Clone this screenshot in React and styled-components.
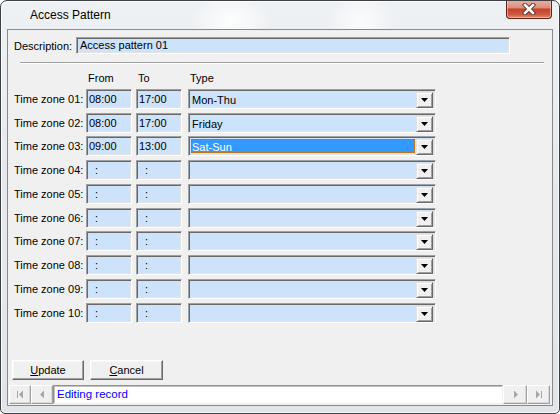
import React from "react";
import styled, { createGlobalStyle } from "styled-components";

const Global = createGlobalStyle`
  html, body { margin: 0; padding: 0; background: #ffffff; }
  * { box-sizing: border-box; }
`;

const FIELD_BG = "#cde2fb";

const Window = styled.div`
  position: relative;
  width: 560px;
  height: 414px;
  border: 1px solid #3c3f44;
  border-radius: 7px 7px 5px 5px;
  padding: 0 6px 7px 6px;
  display: flex;
  flex-direction: column;
  overflow: hidden;
  background:
    radial-gradient(ellipse 60px 40px at 230px 20px, rgba(255,255,255,0.9), rgba(255,255,255,0) 70%),
    radial-gradient(ellipse 50px 40px at 360px 20px, rgba(255,255,255,0.8), rgba(255,255,255,0) 70%),
    linear-gradient(180deg, #eef1f4 0%, #e6eaee 40%, #e1e5ea 100%);
  box-shadow: inset 1px 1px 0 rgba(255,255,255,0.9), inset -1px -1px 0 rgba(255,255,255,0.7);
`;

const TitleBar = styled.div`
  height: 28px;
  display: flex;
  align-items: flex-start;
  justify-content: space-between;
  padding-left: 23px;
`;

const Title = styled.div`
  font-family: "Liberation Sans", Arial, sans-serif;
  font-size: 12px;
  line-height: 28px;
  color: #000;
`;

const CloseButton = styled.div`
  width: 46px;
  height: 19px;
  margin-right: 1px;
  margin-top: -1px;
  border: 1px solid #5e2318;
  border-top: none;
  border-radius: 0 0 4px 4px;
  background: linear-gradient(180deg, #eab0a2 0%, #de8f7d 42%, #c5432d 52%, #cf5a42 80%, #e08a6c 100%);
  box-shadow: inset 0 0 0 1px rgba(255, 210, 200, 0.55);
  display: flex;
  align-items: center;
  justify-content: center;
`;

const Client = styled.div`
  flex: 1;
  border: 1px solid #858a90;
  background: #f0f0f0;
  display: flex;
  flex-direction: column;
  font-family: "Liberation Sans", Arial, sans-serif;
  font-size: 11px;
  color: #000;
`;

const DescRow = styled.div`
  display: flex;
  align-items: center;
  margin-top: 7px;
  padding-left: 6px;
  height: 17px;
`;

const DescLabel = styled.div`
  width: 62px;
`;

const sunken = `
  border: 1px solid;
  border-color: #a0a0a0 #ffffff #ffffff #a0a0a0;
  box-shadow: inset 1px 1px 0 #696969, inset -1px -1px 0 #e3e3e3;
`;

const DescInput = styled.div`
  ${sunken}
  width: 434px;
  height: 17px;
  background: ${FIELD_BG};
  padding-left: 3px;
  line-height: 15px;
  white-space: pre;
`;

const Separator = styled.div`
  margin: 8px 8px 0 12px;
  height: 2px;
  border-top: 1px solid #a0a0a0;
  border-bottom: 1px solid #ffffff;
`;

const Grid = styled.div`
  margin-top: 8px;
  padding-left: 6px;
  display: grid;
  grid-template-columns: 72px 50px 52px 248px;
  grid-template-rows: 13px repeat(10, 20px);
  row-gap: 3.78px;
  align-items: center;
`;

const Header = styled.div`
  padding-left: 2px;
  line-height: 13px;
`;

const RowLabel = styled.div`
  line-height: 20px;
  white-space: nowrap;
`;

const TimeField = styled.div`
  ${sunken}
  width: 46px;
  height: 20px;
  background: ${FIELD_BG};
  padding-left: 2px;
  line-height: 18px;
  white-space: pre;
`;

const Combo = styled.div`
  ${sunken}
  width: 248px;
  height: 20px;
  background: ${FIELD_BG};
  display: flex;
  padding: 1px;
`;

const ComboText = styled.div`
  flex: 1;
  padding-left: 1px;
  line-height: 16px;
  margin: 1px;
  ${(p) =>
    p.$selected
      ? `
    background: #3399ff;
    color: #ffffff;
    border: 1px dotted #b0701c;
    padding-left: 0;
    line-height: 14px;
  `
      : ""}
`;

const DropButton = styled.div`
  width: 17px;
  height: 16px;
  margin: 1px 1px 1px 0;
  background: #f0f0f0;
  border: 1px solid;
  border-color: #e3e3e3 #696969 #696969 #e3e3e3;
  box-shadow: inset 1px 1px 0 #ffffff, inset -1px -1px 0 #a0a0a0;
  display: flex;
  align-items: center;
  justify-content: center;
`;

const Spacer = styled.div`
  flex: 1;
`;

const ButtonRow = styled.div`
  display: flex;
  gap: 6px;
  padding-left: 4px;
  margin-bottom: 5px;
`;

const PushButton = styled.div`
  width: ${(p) => p.$w}px;
  height: 20px;
  background: #f0f0f0;
  border: 1px solid;
  border-color: #ffffff #696969 #696969 #ffffff;
  box-shadow: inset -1px -1px 0 #a0a0a0, inset 1px 1px 0 #f8f8f8;
  display: flex;
  align-items: center;
  justify-content: center;
  line-height: 18px;
`;

const Accel = styled.span`
  text-decoration: underline;
  text-underline-offset: 1px;
`;

const StatusBar = styled.div`
  display: flex;
  height: 19px;
  padding-left: 1px;
  padding-right: 2px;
  margin-bottom: 1px;
`;

const NavButton = styled.div`
  width: ${(p) => p.$w || 22}px;
  height: 19px;
  background: #f0f0f0;
  border: 1px solid;
  border-color: #ffffff #a0a0a0 #a0a0a0 #ffffff;
  box-shadow: inset -1px -1px 0 #d8d8d8;
  display: flex;
  align-items: center;
  justify-content: center;
`;

const StatusText = styled.div`
  flex: 1;
  height: 19px;
  background: #ffffff;
  border: 1px solid;
  border-color: #8f8f8f #f0f0f0 #f0f0f0 #8f8f8f;
  box-shadow: inset 1px 1px 0 #c4c4c4;
  color: #0000ff;
  padding-left: 3px;
  line-height: 17px;
  font-size: 11.5px;
`;

const Arrow = ({ dir, bar }) => (
  <svg width="9" height="9" viewBox="0 0 9 9">
    {dir === "left" ? (
      <>
        {bar && <rect x="1" y="1" width="1" height="7" fill="#a6a6a6" />}
        <polygon points={bar ? "7,0.5 7,8.5 3,4.5" : "6,0.5 6,8.5 2,4.5"} fill="#a6a6a6" />
      </>
    ) : (
      <>
        <polygon points={bar ? "2,0.5 2,8.5 6,4.5" : "3,0.5 3,8.5 7,4.5"} fill="#a6a6a6" />
        {bar && <rect x="7" y="1" width="1" height="7" fill="#a6a6a6" />}
      </>
    )}
  </svg>
);

const DownArrow = () => (
  <svg width="7" height="4" viewBox="0 0 7 4">
    <polygon points="0,0 7,0 3.5,4" fill="#000" />
  </svg>
);

const CloseX = () => (
  <svg width="14" height="12" viewBox="0 0 14 12">
    <path d="M3 2 L11 10 M11 2 L3 10" stroke="#5a2a22" strokeWidth="4.4" strokeLinecap="square" />
    <path d="M3 2 L11 10 M11 2 L3 10" stroke="#ffffff" strokeWidth="2.6" strokeLinecap="square" />
  </svg>
);

const rows = [
  { from: "08:00", to: "17:00", type: "Mon-Thu" },
  { from: "08:00", to: "17:00", type: "Friday" },
  { from: "09:00", to: "13:00", type: "Sat-Sun", selected: true },
  ...Array.from({ length: 7 }, () => ({ from: "  :", to: "  :", type: "" })),
];

export default function App() {
  return (
    <>
      <Global />
      <Window>
        <TitleBar>
          <Title>Access Pattern</Title>
          <CloseButton>
            <CloseX />
          </CloseButton>
        </TitleBar>
        <Client>
          <DescRow>
            <DescLabel>Description:</DescLabel>
            <DescInput>Access pattern 01</DescInput>
          </DescRow>
          <Separator />
          <Grid>
            <div />
            <Header>From</Header>
            <Header>To</Header>
            <Header>Type</Header>
            {rows.map((r, i) => (
              <React.Fragment key={i}>
                <RowLabel>Time zone {String(i + 1).padStart(2, "0")}:</RowLabel>
                <TimeField>{r.from}</TimeField>
                <TimeField>{r.to}</TimeField>
                <Combo>
                  <ComboText $selected={r.selected}>{r.type}</ComboText>
                  <DropButton>
                    <DownArrow />
                  </DropButton>
                </Combo>
              </React.Fragment>
            ))}
          </Grid>
          <Spacer />
          <ButtonRow>
            <PushButton $w={72}>
              <span>
                <Accel>U</Accel>pdate
              </span>
            </PushButton>
            <PushButton $w={73}>
              <span>
                <Accel>C</Accel>ancel
              </span>
            </PushButton>
          </ButtonRow>
          <StatusBar>
            <NavButton>
              <Arrow dir="left" bar />
            </NavButton>
            <NavButton>
              <Arrow dir="left" />
            </NavButton>
            <StatusText>Editing record</StatusText>
            <NavButton $w={24}>
              <Arrow dir="right" />
            </NavButton>
            <NavButton $w={23}>
              <Arrow dir="right" bar />
            </NavButton>
          </StatusBar>
        </Client>
      </Window>
    </>
  );
}
